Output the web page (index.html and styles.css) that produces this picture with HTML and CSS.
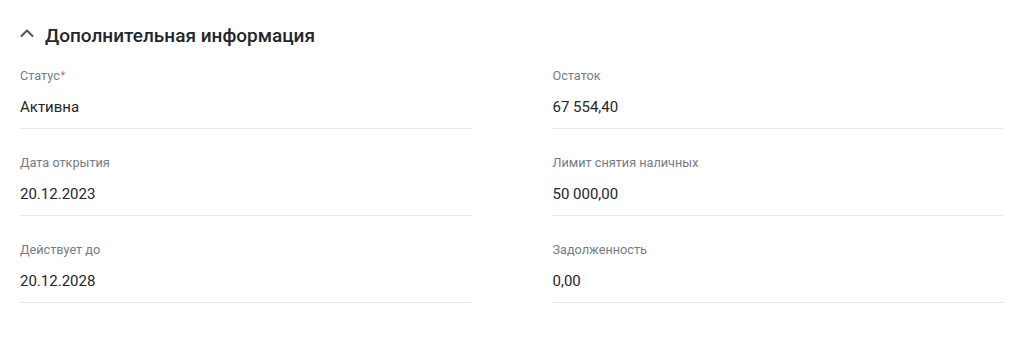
FILE: index.html
```html
<!DOCTYPE html>
<html>
<head>
  <title>Дополнительная информация</title>
  <link rel="stylesheet" href="styles.css">
</head>
<body>
  <div class="section">
    <div class="section-header">
      <svg class="chevron" width="14" height="8" viewBox="0 0 14 8" fill="none" stroke="currentColor" stroke-width="2" stroke-linecap="round" stroke-linejoin="round">
        <polyline points="1.5 7 7 1.5 12.5 7"></polyline>
      </svg>
      <h2>Дополнительная информация</h2>
    </div>

    <div class="fields">
      <div class="field">
        <div class="field-label">Статус<span class="required">*</span></div>
        <div class="field-value">Активна</div>
      </div>
      <div class="field">
        <div class="field-label">Остаток</div>
        <div class="field-value">67 554,40</div>
      </div>
      <div class="field">
        <div class="field-label">Дата открытия</div>
        <div class="field-value">20.12.2023</div>
      </div>
      <div class="field">
        <div class="field-label">Лимит снятия наличных</div>
        <div class="field-value">50 000,00</div>
      </div>
      <div class="field">
        <div class="field-label">Действует до</div>
        <div class="field-value">20.12.2028</div>
      </div>
      <div class="field">
        <div class="field-label">Задолженность</div>
        <div class="field-value">0,00</div>
      </div>
    </div>
  </div>
</body>
</html>
```

FILE: styles.css
```css
body {
  font-family: Roboto, 'Liberation Sans', sans-serif;
  margin: 0;
  background: #ffffff;
  color: #23262b;
}
.section {
  padding: 22px 21px 0 20px;
}
.section-header {
  display: flex;
  align-items: center;
  margin-bottom: 18px;
}
.chevron {
  color: #4b5563;
  margin-right: 11px;
  margin-top: -6px;
}
.section-header h2 {
  margin: 0;
  font-size: 19px;
  line-height: 28px;
  font-weight: 500;
  color: #23262b;
}
.fields {
  display: grid;
  grid-template-columns: 1fr 1fr;
  column-gap: 82px;
  row-gap: 26px;
}
.field {
  border-bottom: 1px solid #e4e5e7;
  padding-bottom: 11px;
}
.field-label {
  font-size: 12.7px;
  line-height: 16px;
  color: #767b86;
  margin-bottom: 13px;
}
.required {
  color: #e5484d;
  font-size: 10px;
  vertical-align: top;
  margin-left: 1px;
}
.field-value {
  font-size: 15px;
  line-height: 20px;
  color: #23262b;
}
```
